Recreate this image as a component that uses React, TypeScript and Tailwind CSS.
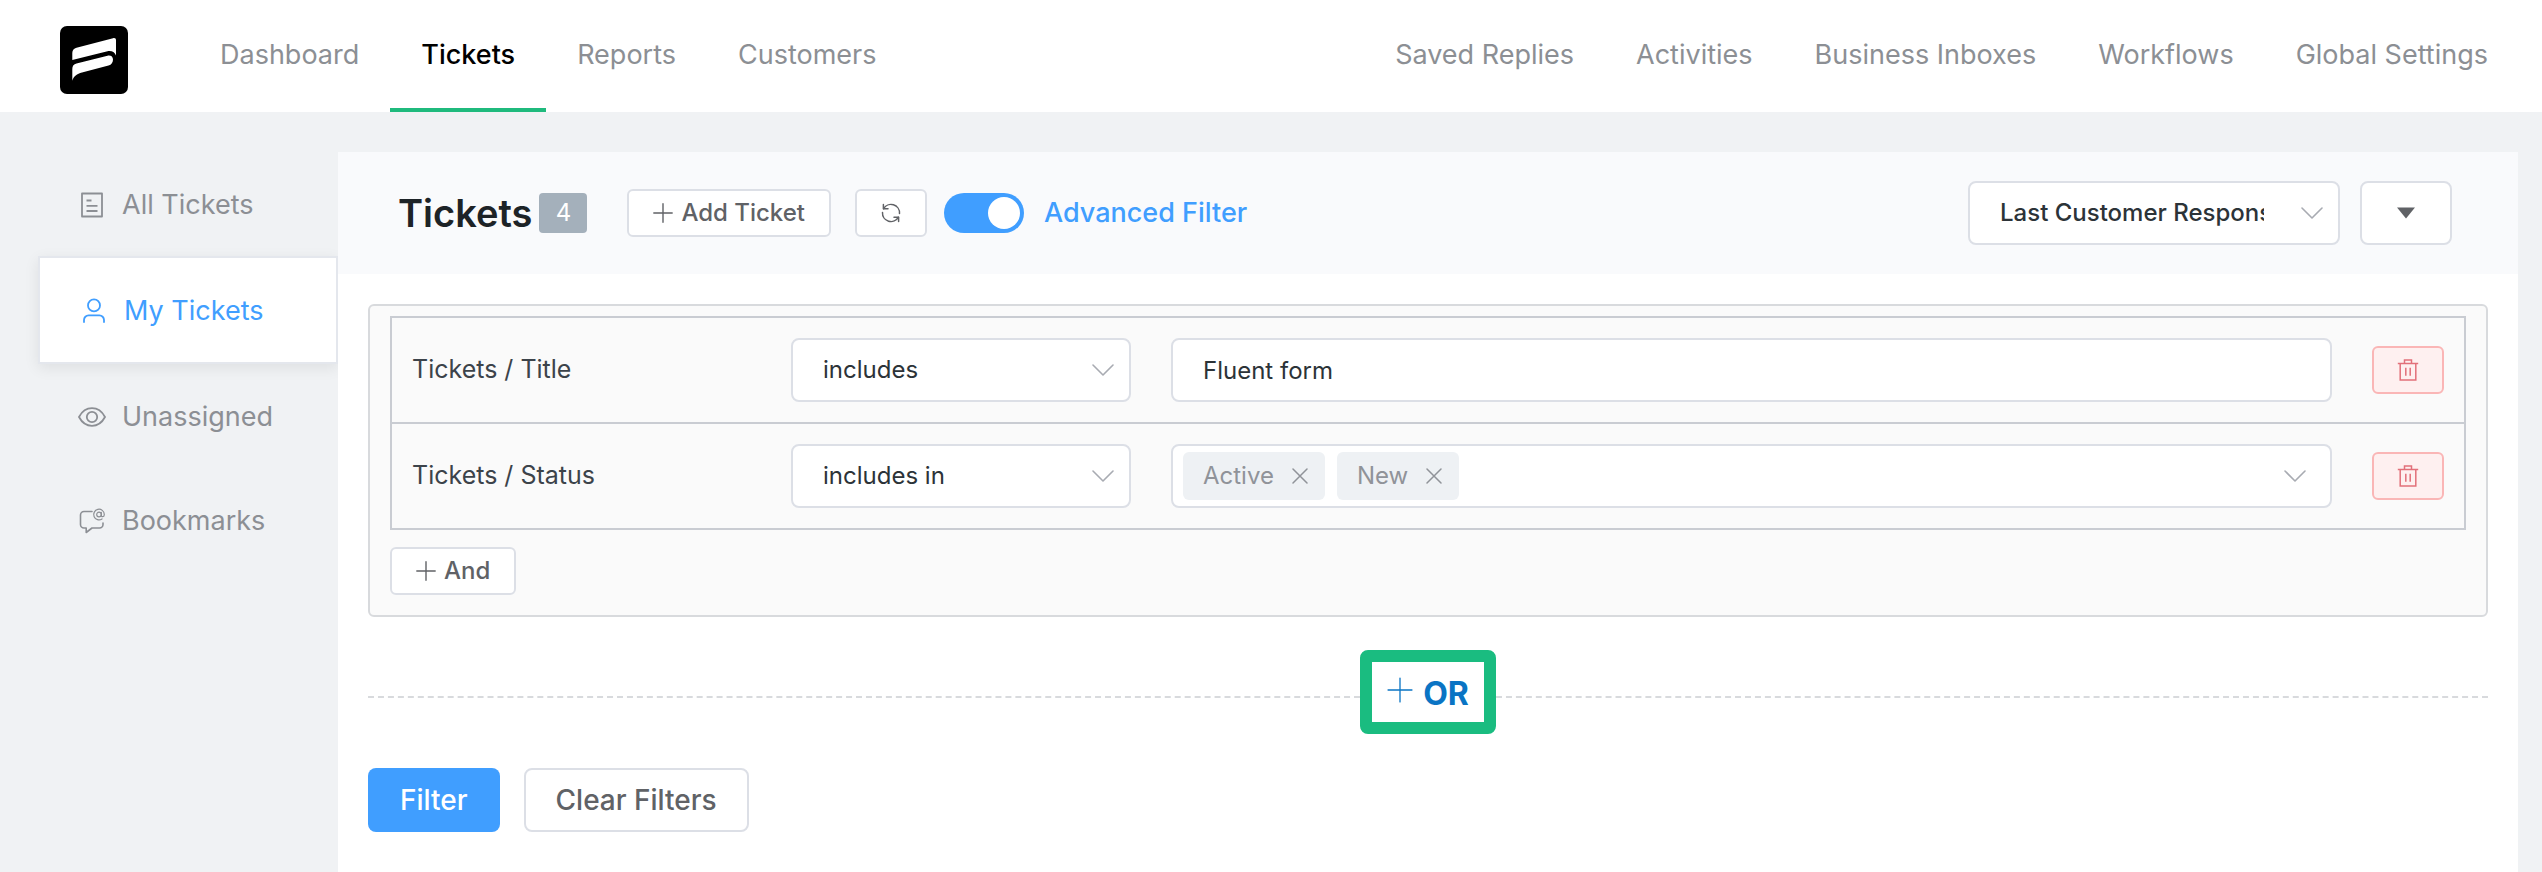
import React, { useState } from "react";

type IconProps = { className?: string };

const PlusIcon = ({ className }: IconProps) => (
	<svg viewBox="0 0 20 20" className={className} fill="none" stroke="currentColor" strokeLinecap="round">
		<path d="M10 0.8v18.4M0.8 10h18.4" />
	</svg>
);

const ChevronIcon = () => (
	<svg
		viewBox="0 0 22 12"
		className="w-[22px] h-3 text-[#a8abb2] pointer-events-none"
		fill="none"
		stroke="currentColor"
		strokeWidth="1.6"
		strokeLinecap="round"
		strokeLinejoin="round"
	>
		<path d="M1 1l10 10L21 1" />
	</svg>
);

const CloseIcon = () => (
	<svg viewBox="0 0 16 16" className="size-4" fill="none" stroke="currentColor" strokeWidth="1.5" strokeLinecap="round">
		<path d="M1 1l14 14M15 1L1 15" />
	</svg>
);

const TrashIcon = () => (
	<svg viewBox="0 0 22 22" className="size-[22px]" fill="none" stroke="currentColor" strokeWidth="1.5">
		<path d="M0.8 4.5h20.4M3.2 4.5v16.4h15.6V4.5M7.5 4.2V1.1h7v3.1M8.8 8.8v8M13.2 8.8v8" />
	</svg>
);

const RefreshIcon = () => (
	<svg
		viewBox="0 0 20 20"
		className="size-5"
		fill="none"
		stroke="currentColor"
		strokeWidth="1.5"
		strokeLinecap="round"
		strokeLinejoin="round"
	>
		<path d="M2.6 5.8A8.5 8.5 0 0 1 18.5 10.5M17.4 14.2A8.5 8.5 0 0 1 1.5 9.5" />
		<path d="M2.4 1.6v4.2H7M17.6 18.4v-4.2H13" />
	</svg>
);

const DocumentIcon = () => (
	<svg viewBox="0 0 28 28" className="size-7" fill="none" stroke="currentColor" strokeWidth="1.8" strokeLinejoin="round">
		<path d="M4 2.5h20v23H4zM8.5 9.5h5M8.5 14.8h11M8.5 20h11" />
	</svg>
);

const UserIcon = () => (
	<svg viewBox="0 0 28 28" className="size-7" fill="none" stroke="currentColor" strokeWidth="1.8" strokeLinecap="round">
		<circle cx="14" cy="8.4" r="6" />
		<path d="M4 25v-2a4.6 4.6 0 0 1 4.6-4.6h10.8A4.6 4.6 0 0 1 24 23v2" />
	</svg>
);

const EyeIcon = () => (
	<svg viewBox="0 0 28 28" className="size-7" fill="none" stroke="currentColor" strokeWidth="1.8">
		<path d="M1 14C4.2 8 8.6 5.2 14 5.2S23.8 8 27 14c-3.2 6-7.6 8.8-13 8.8S4.2 20 1 14z" />
		<circle cx="14" cy="14" r="5.2" />
	</svg>
);

const ChatIcon = () => (
	<svg
		viewBox="0 0 28 28"
		className="size-7"
		fill="none"
		stroke="currentColor"
		strokeWidth="1.6"
		strokeLinecap="round"
		strokeLinejoin="round"
	>
		<path d="M14 4.5H6A3.5 3.5 0 0 0 2.5 8v9.5A3.5 3.5 0 0 0 6 21h2.2v4.5L14 21h7.5a3.5 3.5 0 0 0 3.5-3.5V16" />
		<circle cx="21" cy="7.5" r="2.3" strokeWidth="1.2" />
		<path d="M23.3 5.3v3c0 2.2 3 1.8 3-.9a5.3 5.3 0 1 0-2.3 4.5" strokeWidth="1.2" />
	</svg>
);

const Logo = () => (
	<svg viewBox="0 0 68 68" className="size-[68px]" aria-label="Fluent Support" role="img">
		<rect width="68" height="68" rx="7" fill="#000" />
		<path d="M12.3 34v-7c0-3 1.7-4.6 4.2-5.3L53 12.2c2-.5 3 .3 3 2V29.5c-1.5-3.5-4.5-5-8.5-4.2z" fill="#fff" />
		<path
			d="M12.3 54.7V43c0-3 1.5-4.7 4.2-5.4l31-7.8c3.2-.8 5.5 1 5.5 3.8 0 3-1.5 5.2-4.5 6L22 46.6c-5 1.4-8.5 4-9.7 8.1z"
			fill="#fff"
		/>
	</svg>
);

const leftNav = ["Dashboard", "Tickets", "Reports", "Customers"];
const rightNav = ["Saved Replies", "Activities", "Business Inboxes", "Workflows", "Global Settings"];

const sideNav = [
	{ label: "All Tickets", Icon: DocumentIcon },
	{ label: "My Tickets", Icon: UserIcon },
	{ label: "Unassigned", Icon: EyeIcon },
	{ label: "Bookmarks", Icon: ChatIcon },
];

const DeleteButton = ({ label, onClick }: { label: string; onClick?: () => void }) => (
	<button
		aria-label={label}
		onClick={onClick}
		className="flex w-[72px] h-12 shrink-0 items-center justify-center rounded-md border-2 border-[#fab6b6] bg-[#fef0f0] text-[#e2707a]"
	>
		<TrashIcon />
	</button>
);

const OperatorSelect = ({ label, options }: { label: string; options: string[] }) => (
	<div className="relative w-[340px] shrink-0">
		<select
			aria-label={label}
			className="w-full h-16 appearance-none rounded-lg border-2 border-[#dcdfe6] bg-white pl-[30px] pr-16 text-2xl text-[#2c3338] outline-none"
		>
			{options.map((option) => (
				<option key={option}>{option}</option>
			))}
		</select>
		<div className="absolute inset-y-0 right-[17px] flex items-center pointer-events-none">
			<ChevronIcon />
		</div>
	</div>
);

const App = () => {
	const [advanced, setAdvanced] = useState(true);
	const [title, setTitle] = useState("Fluent form");
	const [statuses, setStatuses] = useState(["Active", "New"]);

	return (
		<div className="flex min-h-screen flex-col bg-[#f0f2f4] font-['Inter','Liberation_Sans',sans-serif]">
			{/* Top bar */}
			<header className="flex h-28 items-stretch justify-between bg-white pl-[60px] pr-[23px]">
				<div className="flex">
					<a href="#" className="flex items-center pt-2">
						<Logo />
					</a>
					<nav className="ml-[61px] flex">
						{leftNav.map((item) => (
							<a
								key={item}
								href="#"
								className={`flex items-center border-b-4 px-[31px] pt-0.5 text-[27px] ${
									item === "Tickets"
										? "border-[#1fba7d] font-medium text-black"
										: "border-transparent text-[#8c8f94]"
								}`}
							>
								{item}
							</a>
						))}
					</nav>
				</div>
				<nav className="flex">
					{rightNav.map((item) => (
						<a
							key={item}
							href="#"
							className="flex items-center border-b-4 border-transparent px-[31px] pt-0.5 text-[27px] text-[#8c8f94]"
						>
							{item}
						</a>
					))}
				</nav>
			</header>

			<div className="flex flex-1 pt-10 pr-6">
				{/* Sidebar */}
				<aside className="w-[338px] shrink-0 pl-[38px]">
					<nav className="flex flex-col">
						{sideNav.map(({ label, Icon }) => (
							<a
								key={label}
								href="#"
								className={`flex items-center gap-4 pl-10 pt-0.5 text-[27px] ${
									label === "My Tickets"
										? "h-[108px] border-2 border-[#e4e7ed] bg-white text-[#409eff] shadow-[0_4px_14px_rgba(0,0,0,0.08)]"
										: "h-[104px] text-[#8c8f94]"
								}`}
							>
								<Icon />
								{label}
							</a>
						))}
					</nav>
				</aside>

				{/* Tickets panel */}
				<main className="relative min-w-0 flex-1 bg-white">
					<div className="flex h-[122px] items-center justify-between bg-[#f9fafc] pl-[60px] pr-[66px]">
						<div className="flex items-center">
							<h1 className="text-[38px] font-semibold text-[#1d2327]">Tickets</h1>
							<span className="ml-[7px] flex h-10 w-12 items-center justify-center rounded bg-[#a4b0bb] text-2xl text-white">
								4
							</span>
							<button className="ml-10 flex h-12 items-center gap-2 rounded-md border-2 border-[#dcdfe6] bg-white px-6 text-2xl font-medium text-[#606266]">
								<PlusIcon className="size-5 stroke-[1.4]" />
								Add Ticket
							</button>
							<button
								aria-label="Refresh tickets"
								className="ml-6 flex h-12 w-[72px] items-center justify-center rounded-md border-2 border-[#dcdfe6] bg-white text-[#606266]"
							>
								<RefreshIcon />
							</button>
							<label className="ml-[17px] flex items-center gap-5 text-[27px] font-medium text-[#409eff]">
								<input
									type="checkbox"
									role="switch"
									checked={advanced}
									onChange={(e) => setAdvanced(e.target.checked)}
									className="flex h-10 w-20 appearance-none items-center rounded-full bg-[#dcdfe6] px-1 before:size-8 before:rounded-full before:bg-white checked:justify-end checked:bg-[#409eff]"
								/>
								Advanced Filter
							</label>
						</div>
						<div className="flex items-center gap-5">
							<div className="relative w-[372px]">
								<select
									aria-label="Sort by"
									className="h-16 w-full appearance-none rounded-lg border-2 border-[#dcdfe6] bg-white pl-[30px] pr-[74px] text-2xl font-medium text-[#2c3338] outline-none"
								>
									<option>Last Customer Response</option>
									<option>Last Agent Response</option>
								</select>
								<div className="absolute inset-y-0 right-[17px] flex items-center pointer-events-none">
									<ChevronIcon />
								</div>
							</div>
							<button
								aria-label="Sort direction"
								className="flex h-16 w-[92px] items-center justify-center rounded-lg border-2 border-[#dcdfe6] bg-white text-[#606266]"
							>
								<svg viewBox="0 0 20 12" className="h-3 w-5" fill="currentColor">
									<path d="M1 0.5h18L10 11.5z" />
								</svg>
							</button>
						</div>
					</div>

					<div className="px-[30px] pt-[30px]">
						{/* Filter group */}
						<section className="rounded-md border-2 border-[#d8dadd] bg-[#fafafa] px-5 pt-[10px] pb-5">
							<div className="divide-y-2 divide-[#c9ccd2] border-2 border-[#c9ccd2]">
								<div className="flex h-[106px] items-center pr-5">
									<label htmlFor="title" className="w-[399px] shrink-0 pl-5 text-[25px] text-[#3c434a]">
										Tickets / Title
									</label>
									<OperatorSelect label="Title operator" options={["includes", "does not include"]} />
									<input
										id="title"
										type="text"
										value={title}
										onChange={(e) => setTitle(e.target.value)}
										className="mx-10 h-16 min-w-0 flex-1 rounded-lg border-2 border-[#dcdfe6] bg-white px-[30px] text-2xl text-[#2c3338] outline-none"
									/>
									<DeleteButton label="Remove title filter" onClick={() => setTitle("")} />
								</div>
								<div className="flex h-[104px] items-center pr-5">
									<span className="w-[399px] shrink-0 pl-5 text-[25px] text-[#3c434a]">Tickets / Status</span>
									<OperatorSelect label="Status operator" options={["includes in", "not includes in"]} />
									<div className="mx-10 flex h-16 min-w-0 flex-1 items-center gap-3 rounded-lg border-2 border-[#dcdfe6] bg-white pl-[10px] pr-6">
										{statuses.map((status) => (
											<span
												key={status}
												className="flex h-12 items-center gap-[18px] rounded-md bg-[#eef1f4] pl-5 pr-[17px] text-2xl text-[#909399]"
											>
												{status}
												<button
													aria-label={`Remove ${status}`}
													onClick={() => setStatuses(statuses.filter((s) => s !== status))}
												>
													<CloseIcon />
												</button>
											</span>
										))}
										<button aria-label="Show statuses" className="ml-auto">
											<ChevronIcon />
										</button>
									</div>
									<DeleteButton label="Remove status filter" onClick={() => setStatuses([])} />
								</div>
							</div>
							<button className="mt-[17px] flex h-12 items-center gap-2 rounded-md border-2 border-[#dcdfe6] bg-white px-6 text-2xl font-medium text-[#606266]">
								<PlusIcon className="size-5 stroke-[1.4]" />
								And
							</button>
						</section>

						{/* OR divider */}
						<div className="mt-[33px] flex items-center">
							<div className="mt-[10px] flex-1 border-t-2 border-dashed border-[#d8dadd]" />
							<button className="flex h-[84px] w-[136px] items-center justify-center gap-2.5 rounded-lg border-12 border-[#1abc80] bg-white pt-1 text-[32px] font-bold text-[#0a74c4]">
								<PlusIcon className="mb-2 size-[26px] stroke-1" />
								OR
							</button>
							<div className="mt-[10px] flex-1 border-t-2 border-dashed border-[#d8dadd]" />
						</div>

						<div className="mt-[34px] flex gap-6 pb-10">
							<button className="h-16 rounded-lg bg-[#409eff] px-8 text-[28px] font-medium text-white">Filter</button>
							<button className="h-16 rounded-lg border-2 border-[#dcdfe6] bg-white px-[30px] text-[28px] font-medium text-[#606266]">
								Clear Filters
							</button>
						</div>
					</div>
				</main>
			</div>
		</div>
	);
};

export default App;
